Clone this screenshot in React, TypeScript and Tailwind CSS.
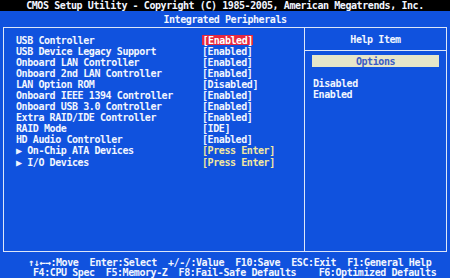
const rows: { label: string; value: string; sub?: boolean; selected?: boolean }[] = [
  { label: "USB Controller", value: "[Enabled]", selected: true },
  { label: "USB Device Legacy Support", value: "[Enabled]" },
  { label: "Onboard LAN Controller", value: "[Enabled]" },
  { label: "Onboard 2nd LAN Controller", value: "[Enabled]" },
  { label: "LAN Option ROM", value: "[Disabled]" },
  { label: "Onboard IEEE 1394 Controller", value: "[Enabled]" },
  { label: "Onboard USB 3.0 Controller", value: "[Enabled]" },
  { label: "Extra RAID/IDE Controller", value: "[Enabled]" },
  { label: "RAID Mode", value: "[IDE]" },
  { label: "HD Audio Controller", value: "[Enabled]" },
  { label: "On-Chip ATA Devices", value: "[Press Enter]", sub: true },
  { label: "I/O Devices", value: "[Press Enter]", sub: true },
];

export default function App() {
  return (
    <div
      className="w-[450px] h-[278px] overflow-hidden bg-[#1052de] text-[#f2f6ff] font-bold text-[10px] tracking-[-0.42px] leading-[11px] flex flex-col"
      style={{ fontFamily: '"DejaVu Sans Mono", "Liberation Mono", monospace' }}
    >
      <div className="h-[11px] bg-black flex items-center justify-center whitespace-pre">
        CMOS Setup Utility - Copyright (C) 1985-2005, American Megatrends, Inc.
      </div>
      <div className="h-[16px] flex items-center justify-center">Integrated Peripherals</div>

      <div className="mx-[3px] h-[225px] border border-[#dde6f8] flex">
        {/* left list */}
        <div className="w-[301px] border-r border-[#dde6f8] pt-[6.5px] pl-[12px]">
          {rows.map((r) => (
            <div key={r.label} className="flex h-[11.1px] items-center whitespace-pre">
              <div className="w-[186px]">
                {r.sub ? "\u25B6 " : ""}
                {r.label}
              </div>
              <div
                className={
                  r.selected
                    ? "bg-[#e8283e] text-white px-[0.5px] h-[10px] flex items-center"
                    : r.sub
                    ? "text-[#f2e8a0]"
                    : ""
                }
              >
                {r.value}
              </div>
            </div>
          ))}
        </div>

        {/* help panel */}
        <div className="flex-1 flex flex-col">
          <div className="h-[23px] border-b border-[#dde6f8] flex items-center justify-center">
            Help Item
          </div>
          <div className="mt-[4px] mx-[7px] h-[12px] bg-[#e6e6c9] text-[#3a5cc4] flex items-center justify-center">
            Options
          </div>
          <div className="mt-[11px] pl-[8px] flex flex-col">
            <div className="h-[11.1px] flex items-center">Disabled</div>
            <div className="h-[11.1px] flex items-center">Enabled</div>
          </div>
        </div>
      </div>

      <div className="pt-[5px] flex flex-col whitespace-pre">
        <div className="h-[10px] flex items-center pl-[28px]">
          {"\u2191\u2193\u2190\u2192:Move  Enter:Select  +/-/:Value  F10:Save  ESC:Exit  F1:General Help"}
        </div>
        <div className="h-[10px] flex items-center pl-[33px]">
          {"F4:CPU Spec  F5:Memory-Z  F8:Fail-Safe Defaults    F6:Optimized Defaults"}
        </div>
      </div>
    </div>
  );
}
